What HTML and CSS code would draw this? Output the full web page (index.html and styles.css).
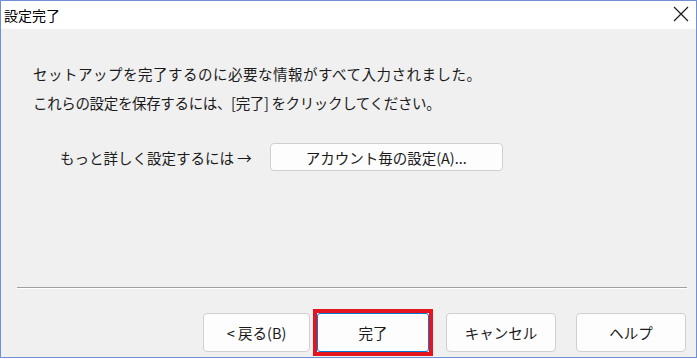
FILE: index.html
```html
<!DOCTYPE html>
<html>
<head>
    <title>設定完了</title>
    <link rel="stylesheet" href="styles.css">
</head>
<body>
    <div class="window">
        <div class="title-bar">
            <span class="title">設定完了</span>
            <svg class="close" width="16" height="16" viewBox="0 0 16 16">
                <path d="M1 1 L15 15 M15 1 L1 15" stroke="#1a1a1a" stroke-width="1.2" fill="none"/>
            </svg>
        </div>
        <div class="content">
            <div class="messages">
                <p class="line-1">セットアップを完了するのに必要な情報がすべて入力されました。</p>
                <p class="line-2">これらの設定を保存するには、[完了] をクリックしてください。</p>
            </div>
            <div class="more-row">
                <span>もっと詳しく設定するには →</span>
                <button class="btn btn-account">アカウント毎の設定(A)...</button>
            </div>
            <div class="spacer"></div>
            <div class="separator"></div>
            <div class="button-row">
                <button class="btn btn-back">&lt; 戻る(B)</button>
                <span class="highlight">
                    <button class="btn btn-done">完了</button>
                </span>
                <button class="btn btn-cancel">キャンセル</button>
                <button class="btn btn-help">ヘルプ</button>
            </div>
        </div>
    </div>
</body>
</html>
```

FILE: styles.css
```css
body {
    margin: 0;
    background-color: #fff;
    font-family: "Noto Sans CJK JP", "Noto Sans", sans-serif;
    color: #1a1a1a;
}

.window {
    width: 697px;
    height: 358px;
    box-sizing: border-box;
    border: 1px solid #6f8fd6;
    display: flex;
    flex-direction: column;
}

.title-bar {
    height: 28px;
    background-color: #fff;
    display: flex;
    align-items: center;
    justify-content: space-between;
    padding: 0 7px 0 3px;
}

.title {
    font-size: 14px;
    color: #000;
}

.close {
    margin-top: -2px;
}

.content {
    flex: 1;
    background-color: #f0f0f0;
    display: flex;
    flex-direction: column;
}

.messages {
    padding: 30px 0 0 32px;
}

.messages p {
    margin: 0;
    font-size: 14.5px;
    line-height: 29px;
}

.line-1 {
    letter-spacing: 0.5px;
}

.line-2 {
    letter-spacing: -0.35px;
}

.more-row {
    display: flex;
    align-items: center;
    margin-top: 26px;
    padding-left: 59px;
    font-size: 14.5px;
}

.btn {
    font-family: "Noto Sans CJK JP", "Noto Sans", sans-serif;
    font-size: 14.5px;
    color: #1a1a1a;
    background-color: #fdfdfd;
    border: 1px solid #d0d0d0;
    border-radius: 4px;
    padding: 0;
}

.btn-account {
    width: 233px;
    height: 28px;
    margin-left: 18px;
}

.spacer {
    flex: 1;
}

.separator {
    margin: 0 9px 0 16px;
    border-top: 1px solid #a0a0a0;
    border-bottom: 1px solid #fff;
}

.button-row {
    display: flex;
    align-items: center;
    padding: 20px 10px 1px 0;
    justify-content: flex-end;
}

.button-row .btn {
    width: 110px;
    height: 39px;
}

.button-row .btn-back {
    width: 107px;
}

.highlight {
    display: flex;
    margin-left: 3px;
    border: 4px solid #e51520;
}

.button-row .btn-done {
    width: 112px;
    border-color: #0078d7;
    border-radius: 3px;
}

.btn-cancel {
    margin-left: 13px;
}

.btn-help {
    margin-left: 20px;
}
```
